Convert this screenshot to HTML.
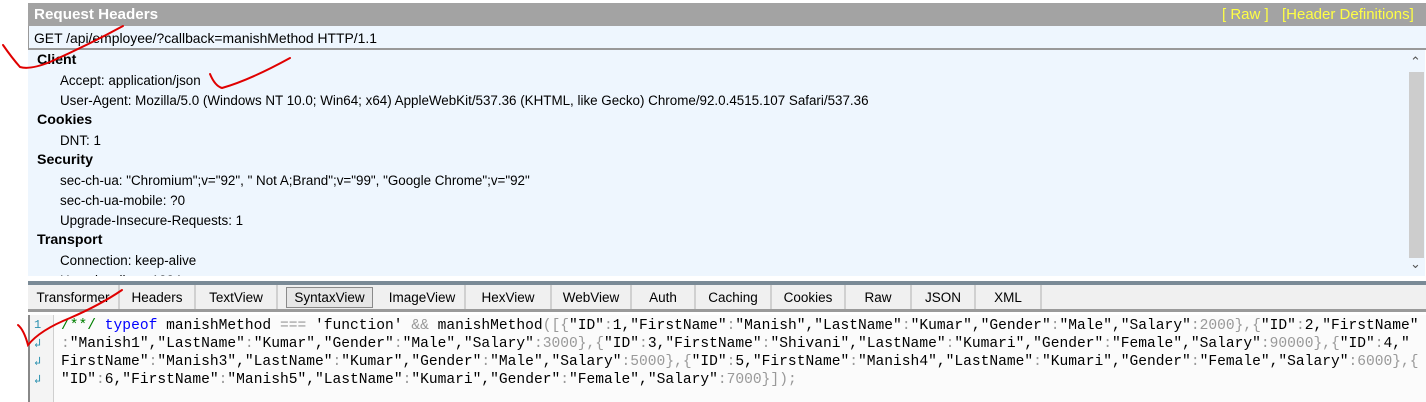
<!DOCTYPE html>
<html><head><meta charset="utf-8"><style>
*{margin:0;padding:0;box-sizing:border-box}
body{width:1426px;height:402px;background:#fff;position:relative;overflow:hidden;font-family:"Liberation Sans",sans-serif;font-size:12px;color:#000}
.abs{position:absolute}
.title{left:28px;top:3px;width:1398px;height:23px;background:#a3a3a3;color:#fff;font-weight:bold;font-size:15.2px;line-height:24px;padding-left:6px}
.title .lnk{position:absolute;top:0;color:#ffff44;font-weight:normal;font-size:15px}
.req{left:28px;top:26px;width:1398px;height:24px;background:#eef6fe;border-bottom:2px solid #999;border-left:1px solid #999;line-height:24px;padding-left:5px;font-size:13.9px}
.hdr{left:28px;top:50px;width:1380px;height:226px;background:#eef6fe;overflow:hidden}
.hdr div{height:20px;line-height:21px}
.g{font-weight:bold;padding-left:9px;font-size:14.2px}
.i{padding-left:32px;font-size:13.4px}
.sb{left:1408px;top:50px;width:17px;height:226px;background:#eef6fe}
.thumb{left:1409px;top:72px;width:15px;height:186px;background:#cdcdcd}
.bar{left:28px;top:281px;width:1398px;height:4px;background:#7a8a96}
.tabs{left:28px;top:285px;width:1398px;height:27px;background:#f0f0f0;border-bottom:3px solid #9a9a9a}
.tab{position:absolute;top:0;height:24px;line-height:25px;font-size:13.5px;text-align:center;border-right:2px solid #d0d0d0}
.sel{background:#e6e6e6;border:1px solid #8a8a8a;top:2px;height:21px;line-height:20px}
.code{left:28px;top:315px;width:1398px;height:87px;background:#fbfbfb;border-left:2px solid #888}
.gut{left:30px;top:315px;width:24px;height:87px;background:#f4f4f4;border-right:1px solid #cfcfcf}
.cl{position:absolute;left:61px;font-family:"Liberation Mono",monospace;font-size:14.6px;white-space:pre;color:#000;line-height:18px}
.gl{position:absolute;left:34px;font-family:"Liberation Mono",monospace;font-size:12px;color:#2b91af}
.op{color:#999}.kw{color:#0000ff}.cm{color:#008000}
</style></head><body>
<div class="abs title">Request Headers<span class="lnk" style="left:1194px">[ Raw ]</span><span class="lnk" style="left:1254px">[Header Definitions]</span></div>
<div class="abs req">GET /api/employee/?callback=manishMethod HTTP/1.1</div>
<div class="abs hdr">
<div class="g">Client</div>
<div class="i">Accept: application/json</div>
<div class="i">User-Agent: Mozilla/5.0 (Windows NT 10.0; Win64; x64) AppleWebKit/537.36 (KHTML, like Gecko) Chrome/92.0.4515.107 Safari/537.36</div>
<div class="g">Cookies</div>
<div class="i">DNT: 1</div>
<div class="g">Security</div>
<div class="i">sec-ch-ua: "Chromium";v="92", " Not A;Brand";v="99", "Google Chrome";v="92"</div>
<div class="i">sec-ch-ua-mobile: ?0</div>
<div class="i">Upgrade-Insecure-Requests: 1</div>
<div class="g">Transport</div>
<div class="i">Connection: keep-alive</div>
<div class="i">Host: localhost:1234</div>
</div>
<div class="abs sb"></div>
<div class="abs thumb"></div>
<div class="abs" style="left:1410px;top:54px;font-size:13px;color:#555">&#8963;</div>
<div class="abs" style="left:1410px;top:256px;font-size:13px;color:#555">&#8964;</div>
<div class="abs bar"></div>
<div class="abs tabs">
<div class="tab" style="left:0;width:92px">Transformer</div>
<div class="tab" style="left:92px;width:76px">Headers</div>
<div class="tab" style="left:168px;width:82px">TextView</div>
<div class="tab sel" style="left:258px;width:87px">SyntaxView</div>
<div class="tab" style="left:352px;width:86px">ImageView</div>
<div class="tab" style="left:438px;width:86px">HexView</div>
<div class="tab" style="left:524px;width:80px">WebView</div>
<div class="tab" style="left:604px;width:64px">Auth</div>
<div class="tab" style="left:668px;width:76px">Caching</div>
<div class="tab" style="left:744px;width:74px">Cookies</div>
<div class="tab" style="left:818px;width:66px">Raw</div>
<div class="tab" style="left:884px;width:64px">JSON</div>
<div class="tab" style="left:948px;width:66px">XML</div>
</div>
<div class="abs code"></div>
<div class="abs gut"></div>
<div class="gl" style="top:318px">1</div>
<div class="gl" style="top:336px">&#8626;</div>
<div class="gl" style="top:354px">&#8626;</div>
<div class="gl" style="top:372px">&#8626;</div>
<div class="cl" style="top:317px"><span class="cm">/**/</span> <span class="kw">typeof</span> manishMethod <span class="op">===</span> 'function' <span class="op">&amp;&amp;</span> manishMethod<span class="op">([{</span>"ID"<span class="op">:</span>1,"FirstName"<span class="op">:</span>"Manish","LastName"<span class="op">:</span>"Kumar","Gender"<span class="op">:</span>"Male","Salary"<span class="op">:2000},{</span>"ID"<span class="op">:</span>2,"FirstName"</div>
<div class="cl" style="top:335px"><span class="op">:</span>"Manish1","LastName"<span class="op">:</span>"Kumar","Gender"<span class="op">:</span>"Male","Salary"<span class="op">:3000},{</span>"ID"<span class="op">:</span>3,"FirstName"<span class="op">:</span>"Shivani","LastName"<span class="op">:</span>"Kumari","Gender"<span class="op">:</span>"Female","Salary"<span class="op">:90000},{</span>"ID"<span class="op">:</span>4,"</div>
<div class="cl" style="top:353px">FirstName"<span class="op">:</span>"Manish3","LastName"<span class="op">:</span>"Kumar","Gender"<span class="op">:</span>"Male","Salary"<span class="op">:5000},{</span>"ID"<span class="op">:</span>5,"FirstName"<span class="op">:</span>"Manish4","LastName"<span class="op">:</span>"Kumari","Gender"<span class="op">:</span>"Female","Salary"<span class="op">:6000},{</span></div>
<div class="cl" style="top:371px">"ID"<span class="op">:</span>6,"FirstName"<span class="op">:</span>"Manish5","LastName"<span class="op">:</span>"Kumari","Gender"<span class="op">:</span>"Female","Salary"<span class="op">:7000}]);</span></div>
<svg class="abs" style="left:0;top:0" width="1426" height="402">
<g fill="none" stroke="#e00000" stroke-width="2" stroke-linecap="round">
<path d="M3 45 Q12 58 20 67 Q30 70 50 62 Q90 44 123 26"/>
<path d="M210 74 Q215 86 222 88 Q250 80 290 58"/>
<path d="M18 325 Q24 330 28 345 Q40 330 70 318 Q100 305 122 290"/>
</g>
</svg>
</body></html>
